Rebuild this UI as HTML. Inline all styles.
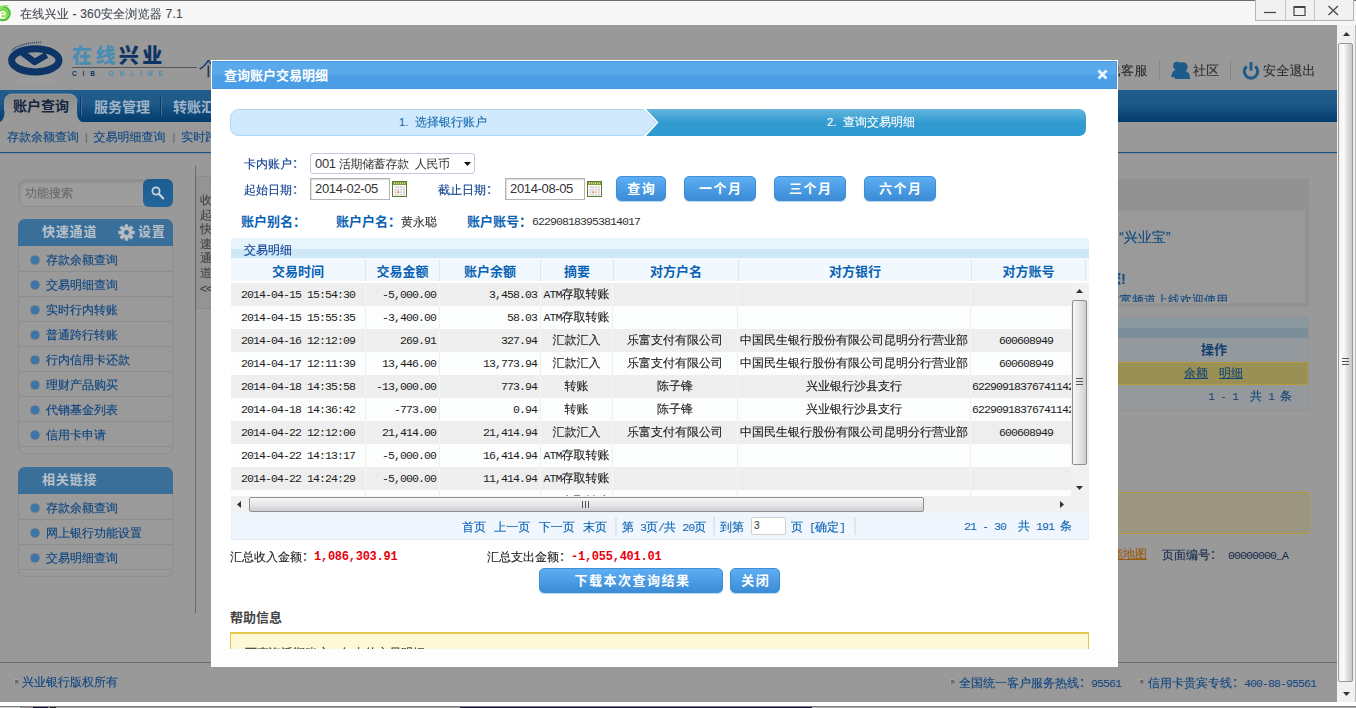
<!DOCTYPE html>
<html lang="zh-CN">
<head>
<meta charset="utf-8">
<title>在线兴业 - 360安全浏览器 7.1</title>
<style>
*{box-sizing:border-box;margin:0;padding:0}
html,body{width:1356px;height:708px;overflow:hidden;background:#fff}
body{position:relative;font-family:"Liberation Sans","WenQuanYi Zen Hei","Noto Sans CJK SC",sans-serif;font-size:12px;color:#333;-webkit-text-stroke:0.12px currentColor}
.abs{position:absolute}
.cn{font-family:"Noto Sans CJK SC",sans-serif}
b,.b{font-family:"Liberation Sans","Noto Sans CJK SC",sans-serif;font-weight:bold;-webkit-text-stroke:0}
.num{font-family:"Liberation Mono","WenQuanYi Zen Hei",monospace;font-size:11.5px;letter-spacing:-0.9px;-webkit-text-stroke:0}
/* ---------- browser chrome ---------- */
#chrome{left:0;top:0;width:1356px;height:25px;background:#f7f7f7;border-top:1px solid #707070}
#chrome .title{left:20px;top:5px;font-size:12px;color:#454a52;white-space:nowrap;letter-spacing:0.22px}
#winbtn{left:1255px;top:-1px;width:99px;height:21px;border:1px solid #b5b5b5;border-top:none;background:#f1f1f1}
#winbtn i{position:absolute;top:0;width:1px;height:20px;background:#c4c4c4}
/* ---------- page (dimmed) ---------- */
#page{left:0;top:25px;width:1337px;height:677px;background:#999;overflow:hidden}
#vscroll{left:1337px;top:25px;width:19px;height:677px;padding-left:1px;background:#f1f1f1;border-right:1px solid #b8b8b8}
#bottomw{left:0;top:702px;width:1356px;height:4px;background:#fff}
#bottomd{left:0;top:706px;width:1356px;height:2px;background:linear-gradient(#7a7a7a 0 50%,transparent 50%),linear-gradient(90deg,#d4d4d4 0 20px,#9b8d96 20px 33px,#10103c 33px 48px,#8a8a8a 48px 50px,#222 50px 56px,#a6a6a6 56px 460px,#141440 460px 812px,#b0b0b0 812px)}
.nav{left:0;top:65px;width:1338px;height:32px;background:linear-gradient(#215d8c 0%,#1f5a89 40%,#0a4576 80%,#043c6b 100%)}
.tab{top:3px;height:28px;font-size:15px;letter-spacing:1.5px;line-height:28px;white-space:nowrap;color:#9fb3c6}
.sub{top:97px;left:0;width:1338px;height:31px;border-bottom:1px solid #15548e;box-shadow:0 1px 1px #8d8d8d;color:#0e4782;line-height:31px;white-space:nowrap}
.side-h{left:18px;width:155px;height:27px;background:#3a6f9a;border-radius:7px 7px 0 0;color:#b8c1ca;font-size:13px;line-height:26px;letter-spacing:0.8px}
.side-b{left:18px;width:155px;border:1px solid #8e8e8e;border-top:none;border-radius:0 0 7px 7px;background:#9a9a9a}
.side-b{padding-top:1px}
.side-b div{height:25px;line-height:27px;border-bottom:1px solid #8d8d8d;padding-left:27px;color:#0a4480;position:relative;white-space:nowrap}
.side-b div:before{content:"";position:absolute;left:12px;top:9px;width:8px;height:8px;border-radius:50%;background:#3b76aa;box-shadow:0 0 0 0.8px #70767c}
.foot{color:#0f4580;white-space:nowrap}
.sq{width:5px;height:5px;background:#6c6c6c;border:1px solid #a8a8a8;border-right-color:#8a8a8a;border-bottom-color:#8a8a8a;border-radius:1px}
/* ---------- dialog ---------- */
#dlg{left:211px;top:60px;width:907px;height:607px;background:#fff;overflow:hidden}
#dlg .hd{left:1px;top:1px;width:905px;height:28px;box-shadow:inset 0 1px 0 #4796e0,inset -1px 0 0 #4796e0;background:linear-gradient(#5aa9ea 0%,#5aa9ea 46%,#4c9fe6 54%,#4a9ee5 100%);border-bottom:1px solid #4792dc;color:#fff;font-size:13px;line-height:30px;padding-left:12px}
.lbl{color:#0d3f8f;white-space:nowrap}
.inp{-webkit-text-stroke:0;border:1px solid #b4b4b4;background:#fff;height:22px;line-height:20px;padding-left:4px;font-size:13px;letter-spacing:-0.35px;color:#333;white-space:nowrap;box-shadow:inset 1px 1px 1px #ddd}
.btn{height:25px;border:1px solid #3f8ed6;border-radius:5px;background:linear-gradient(#5eaef2 0%,#4c9de5 50%,#3c8bd6 100%);color:#fff;font-size:13px;line-height:23px;text-align:center;letter-spacing:1.5px;white-space:nowrap;box-shadow:0 1px 1px #b5d3ee}
.th{top:199px;height:22px;line-height:26px;text-align:center;color:#0a62b4;font-size:13px;background:#f2f9fe;border-right:1px solid #d9e8f3;white-space:nowrap}
.row{left:20px;width:840px;height:23px;line-height:23px;white-space:nowrap;color:#1c1c1c;overflow:hidden}
.row>span{position:absolute;top:0;height:23px;border-right:1px solid #ededed;overflow:hidden}
.row.g{background:#eee}
.row.g>span{border-right-color:#f7f7f7}
.row.w{background:#fcfdfd}
.c1{left:0;width:135px;padding-left:10px}
.c2{left:135px;width:74px;text-align:right;padding-right:3px}
.c3{left:209px;width:101px;text-align:right;padding-right:3px}
.c4{left:310px;width:72px;text-align:center}
.c5{left:382px;width:125px;text-align:center}
.c6{left:507px;width:233px;text-align:center}
.c7{left:740px;width:110px;text-align:center;border-right:none!important}
.c7.l{text-align:left;padding-left:1px}
.pg{color:#0a62b4;white-space:nowrap;word-spacing:2.7px}
.pg .num{word-spacing:0}
</style>
</head>
<body>
<!-- browser title bar -->
<div id="chrome" class="abs">
  <svg class="abs" style="left:0;top:3px" width="13" height="19" viewBox="0 0 13 19"><circle cx="3" cy="9.5" r="7.8" fill="#4cbf3a"/><circle cx="3" cy="9.5" r="6" fill="#7bdc55"/><path d="M-3 5Q3-1 10 2Q5 1.5 0 5z" fill="#8fe06a"/><text x="-1.5" y="14.5" font-size="14" font-weight="bold" fill="#fff" font-family="Liberation Sans, sans-serif">e</text></svg>
  <div class="abs title">在线兴业 - 360安全浏览器 7.1</div>
  <div id="winbtn" class="abs"><i style="left:29px"></i><i style="left:58px"></i>
    <svg class="abs" style="left:0;top:0" width="98" height="20" viewBox="0 0 98 20"><path d="M8 12.5h12" stroke="#444" stroke-width="1.2" fill="none"/><path d="M38 6.5h11v9h-11z M38 7.4h11" stroke="#444" stroke-width="1.2" fill="none"/><path d="M72.5 6l9.5 9M82 6l-9.5 9" stroke="#444" stroke-width="1.2" fill="none"/></svg>
  </div>
</div>

<!-- dimmed page -->
<div id="page" class="abs">
  <!-- header -->
  <svg class="abs" style="left:0;top:10px" width="70" height="50" viewBox="0 35 70 50">
    <ellipse cx="35.3" cy="60.3" rx="23.7" ry="11.6" fill="none" stroke="#0c3466" stroke-width="7"/>
    <path d="M22 52.5 L34.6 62 L46.6 54.9" fill="none" stroke="#0c3466" stroke-width="6.4" stroke-linejoin="round"/>
    <path d="M12 50.5 Q19 43 41 42.3" fill="none" stroke="#1d3e70" stroke-width="1.8" stroke-dasharray="1.1 0.9" opacity="0.8"/>
    <ellipse cx="35" cy="80" rx="22" ry="3" fill="#a0a0a0" opacity="0.5"/>
  </svg>
  <div class="abs b" style="left:72px;top:18px;font-size:20px;font-weight:900;line-height:26px;letter-spacing:3.4px;white-space:nowrap;color:#0d3465"><span style="color:#4b8db2">在线</span>兴业</div>
  <div class="abs" style="left:72px;top:42px;width:125px;height:1px;background:#555"></div>
  <div class="abs b" style="left:72px;top:45px;font-size:6.5px;line-height:8px;letter-spacing:5.9px;white-space:nowrap;color:#0d3465">CIB <span style="color:#4b8db2">ONLINE</span></div>
  <div class="abs" style="left:199px;top:35px;width:140px;height:24px;overflow:hidden"><div class="abs" style="left:0;top:-2px;font-size:19px;line-height:22px;color:#143d6e;white-space:nowrap">个人网上银行</div></div>
  <!-- header right links -->
  <div class="abs" style="left:1094px;top:38px;font-size:13px;line-height:16px;color:#2e2e2e;white-space:nowrap;letter-spacing:0.5px">在线客服</div>
  <div class="abs" style="left:1159px;top:35px;width:1px;height:20px;background:#868686"></div>
  <svg class="abs" style="left:1170px;top:36px" width="22" height="19" viewBox="0 0 22 19"><g fill="#1c5b8a"><circle cx="7.2" cy="4.8" r="4.1"/><path d="M1.2 16.2q0.8-7.6 6-7.6t5 7.6z"/><circle cx="12.8" cy="6" r="4.8"/><path d="M4.6 18q0.6-8.2 8.2-8.2t7.4 8.2z"/></g></svg>
  <div class="abs" style="left:1193px;top:38px;font-size:13px;line-height:16px;color:#2e2e2e;white-space:nowrap;letter-spacing:0.3px">社区</div>
  <div class="abs" style="left:1230px;top:35px;width:1px;height:20px;background:#868686"></div>
  <svg class="abs" style="left:1241px;top:36px" width="20" height="20" viewBox="0 0 20 20"><path d="M14.3 5.3A6.7 6.7 0 1 1 5.7 5.3" fill="none" stroke="#1c5b8a" stroke-width="3"/><path d="M10 1v8.6" stroke="#1c5b8a" stroke-width="2.8"/></svg>
  <div class="abs" style="left:1263px;top:38px;font-size:13px;line-height:16px;color:#2e2e2e;white-space:nowrap;letter-spacing:0.2px">安全退出</div>

  <!-- main nav -->
  <div class="abs nav">
    <svg class="abs" style="left:0;top:3px" width="84" height="29" viewBox="0 0 84 29"><defs><linearGradient id="tg" x1="0" y1="0" x2="0" y2="1"><stop offset="0" stop-color="#8c8c8c"/><stop offset="0.5" stop-color="#979797"/><stop offset="1" stop-color="#999"/></linearGradient></defs><path d="M0 29C4 27 4.5 22 4.5 18V8.5A7.5 7.5 0 0 1 12 1H69.5A7.5 7.5 0 0 1 77 8.5V18C77 23 78 27 82 29z" fill="url(#tg)"/><path d="M4.5 18V8.5A7.5 7.5 0 0 1 12 1H69.5A7.5 7.5 0 0 1 77 8.5" fill="none" stroke="#a6a6a6" stroke-width="1" opacity="0.7"/></svg>
    <div class="abs tab b" style="left:13px;top:2px;color:#14263f;letter-spacing:0;font-size:14px">账户查询</div>
    <div class="abs" style="left:80px;top:7px;width:1px;height:19px;background:#0d3760"></div><div class="abs" style="left:81px;top:7px;width:1px;height:19px;background:#3a729f"></div>
    <div class="abs tab b" style="left:94px;letter-spacing:0;font-size:14px">服务管理</div>
    <div class="abs" style="left:160px;top:7px;width:1px;height:19px;background:#0d3760"></div><div class="abs" style="left:161px;top:7px;width:1px;height:19px;background:#3a729f"></div>
    <div class="abs tab b" style="left:173px;letter-spacing:0;font-size:14px">转账汇款</div>
  </div>
  <!-- sub nav -->
  <div class="abs sub"><span style="margin-left:7px">存款余额查询</span><span style="margin:0 6px 0 6px;color:#666;font-size:10px">|</span>交易明细查询<span style="margin:0 6px 0 7px;color:#666;font-size:10px">|</span>实时跨行转账</div>

  <!-- left sidebar -->
  <div class="abs" style="left:18px;top:154px;width:155px;height:28px;border-radius:7px;background:#9d9d9d;border:1px solid #919191;box-shadow:inset 1px 2px 3px #8a8a8a"></div>
  <div class="abs" style="left:25px;top:160px;color:#696969;font-size:12px;line-height:16px;white-space:nowrap">功能搜索</div>
  <div class="abs" style="left:143px;top:154px;width:30px;height:28px;border-radius:6px;background:linear-gradient(#1d5c8f,#23669b)"></div>
  <svg class="abs" style="left:150px;top:160px" width="16" height="16" viewBox="0 0 16 16"><circle cx="6" cy="6" r="3.6" fill="none" stroke="#c9d3dc" stroke-width="1.8"/><path d="M8.8 8.8l4.4 4.6" stroke="#c9d3dc" stroke-width="2.2" stroke-linecap="round"/></svg>

  <div class="abs side-h b" style="top:194px"><span class="abs" style="left:24px;top:0">快速通道</span>
    <svg class="abs" style="left:100px;top:5px" width="17" height="17" viewBox="-8.5 -8.5 17 17"><g fill="#b4bcc4"><circle r="5.6"/><rect x="-1.8" y="-8.2" width="3.6" height="16.4" rx="0.6" transform="rotate(0)"/><rect x="-1.8" y="-8.2" width="3.6" height="16.4" rx="0.6" transform="rotate(45)"/><rect x="-1.8" y="-8.2" width="3.6" height="16.4" rx="0.6" transform="rotate(90)"/><rect x="-1.8" y="-8.2" width="3.6" height="16.4" rx="0.6" transform="rotate(135)"/></g><circle r="2.4" fill="#3a6f9a"/></svg>
    <span class="abs" style="left:120px;top:0">设置</span></div>
  <div class="abs side-b" style="top:221px;height:208px">
    <div>存款余额查询</div><div>交易明细查询</div><div>实时行内转账</div><div>普通跨行转账</div><div>行内信用卡还款</div><div>理财产品购买</div><div>代销基金列表</div><div>信用卡申请</div>
  </div>
  <div class="abs side-h b" style="top:442px"><span class="abs" style="left:24px;top:0">相关链接</span></div>
  <div class="abs side-b" style="top:469px;height:83px">
    <div>存款余额查询</div><div>网上银行功能设置</div><div>交易明细查询</div>
  </div>

  <!-- divider + collapse handle -->
  <div class="abs" style="left:195px;top:141px;width:1px;height:447px;background:#6a6a6a"></div>
  <div class="abs" style="left:196px;top:151px;width:20px;height:133px;background:#949494;border:1px solid #8b8b8b"></div>
  <div class="abs" style="left:200px;top:168px;width:12px;font-size:12px;line-height:14.6px;color:#444;word-break:break-all">收起快速通道<span style="white-space:nowrap;letter-spacing:-1px;display:block;margin-top:1px">&lt;&lt;</span></div>

  <!-- right side content -->
  <div class="abs" style="left:600px;top:154px;width:709px;height:128px;background:#919191"></div>
  <div class="abs" style="left:600px;top:185px;width:706px;height:94px;background:#9a9a9a;border:1px solid #949494;overflow:hidden">
    <div class="abs" style="left:518px;top:17px;font-size:14px;line-height:18px;color:#124a80;white-space:nowrap">“兴业宝”</div>
    <div class="abs b" style="left:478px;top:59px;font-size:14px;line-height:18px;color:#124a80;white-space:nowrap">欢迎您!</div>
    <div class="abs" style="left:0;top:0;width:704px;height:91px;overflow:hidden"><div class="abs" style="left:459px;top:82px;font-size:12px;line-height:14px;color:#124a80;white-space:nowrap">兴业银行财富频道上线欢迎使用</div></div>
  </div>
  <div class="abs" style="left:600px;top:292px;width:709px;height:94px;background:#96999b;border:1px solid #929292"></div>
  <div class="abs" style="left:600px;top:293px;width:708px;height:10px;background:#8c989f"></div>
  <div class="abs" style="left:600px;top:303px;width:708px;height:10px;background:#7b8e99"></div>
  <div class="abs" style="left:600px;top:313px;width:708px;height:24px;background:#93999d"></div>
  <div class="abs b" style="left:1201px;top:316px;font-size:13px;line-height:18px;color:#123f6c;white-space:nowrap">操作</div>
  <div class="abs" style="left:600px;top:337px;width:708px;height:23px;background:#9a8f55;border:1px solid #b39a35;border-left:none"></div>
  <div class="abs" style="left:1184px;top:340px;line-height:16px;color:#114779;white-space:nowrap;text-decoration:underline">余额</div>
  <div class="abs" style="left:1219px;top:340px;line-height:16px;color:#114779;white-space:nowrap;text-decoration:underline">明细</div>
  <div class="abs" style="left:1208px;top:363px;line-height:16px;color:#114779;white-space:nowrap"><span class="num">1 - 1&nbsp; </span>共<span class="num"> 1 </span>条</div>
  <div class="abs" style="left:600px;top:467px;width:709px;height:42px;background:#9b9581;border:1px solid #ae9a3a"></div>
  <div class="abs" style="left:1099px;top:521px;line-height:16px;color:#9a5a10;white-space:nowrap;text-decoration:underline">功能地图</div>
  <div class="abs" style="left:1162px;top:521px;line-height:16px;color:#15294a;white-space:nowrap">页面编号<span class="cn">：</span><span class="num"> 00000000_A</span></div>

  <!-- footer -->
  <div class="abs" style="left:0;top:637px;width:1338px;height:1px;background:#6c6c6c"></div>
  <div class="abs sq" style="left:14px;top:654px"></div>
  <div class="abs foot" style="left:22px;top:649px;line-height:16px">兴业银行版权所有</div>
  <div class="abs sq" style="left:950px;top:654px"></div>
  <div class="abs foot" style="left:959px;top:649px;line-height:16px">全国统一客户服务热线<span class="cn">：</span><span class="num">95561</span></div>
  <div class="abs sq" style="left:1139px;top:654px"></div>
  <div class="abs foot" style="left:1148px;top:649px;line-height:16px">信用卡贵宾专线<span class="cn">：</span><span class="num">400-88-95561</span></div>
</div>

<div id="vscroll" class="abs">
  <svg class="abs" style="left:6px;top:7px" width="7" height="4" viewBox="0 0 7 4"><path d="M0 4h7L3.5 0z" fill="#333"/></svg>
  <div class="abs" style="left:1px;top:18px;width:15px;height:639px;border:1px solid #979797;border-radius:2px;background:linear-gradient(90deg,#f2f2f2 0%,#fbfbfb 35%,#dcdcdf 70%,#c6c6ca 100%)"></div>
  <div class="abs" style="left:5px;top:333px;width:7px;height:8px;background:repeating-linear-gradient(#555 0 1px,transparent 1px 3px)"></div>
  <svg class="abs" style="left:6px;top:667px" width="7" height="4" viewBox="0 0 7 4"><path d="M0 0h7L3.5 4z" fill="#333"/></svg>
</div>
<div id="bottomw" class="abs"></div>
<div id="bottomd" class="abs"></div>

<!-- dialog -->
<div id="dlg" class="abs">
  <div class="abs hd b">查询账户交易明细
    <svg class="abs" style="left:885px;top:8px" width="11" height="11" viewBox="0 0 11 11"><path d="M1.5 1.5l8 8M9.5 1.5l-8 8" stroke="#eef6ff" stroke-width="2.6"/></svg>
  </div>
  <!-- steps -->
  <svg class="abs" style="left:19px;top:48px" width="858" height="30" viewBox="0 0 858 30">
    <defs><linearGradient id="sg" x1="0" y1="0" x2="0" y2="1"><stop offset="0" stop-color="#66b5dd"/><stop offset="0.5" stop-color="#329cd1"/><stop offset="1" stop-color="#2f9ad0"/></linearGradient></defs>
    <path d="M8.5 1.5H413.5l12.5 13-12.5 13H8.5a8 8 0 0 1-8-8v-10a8 8 0 0 1 8-8z" fill="#d0e9fc" stroke="#a9d6f7" stroke-width="1"/>
    <path d="M416 1h433a7 7 0 0 1 7 7v13a7 7 0 0 1-7 7H416l12.5-13.5z" fill="url(#sg)"/>
  </svg>
  <div class="abs" style="left:19px;top:49px;width:426px;height:27px;line-height:27px;text-align:center;color:#1c6db2;white-space:nowrap"><span style="font-size:11px">1.</span>&nbsp; 选择银行账户</div>
  <div class="abs" style="left:445px;top:49px;width:430px;height:27px;line-height:27px;text-align:center;color:#fff;white-space:nowrap;padding-left:0"><span style="font-size:11px">2.</span>&nbsp; 查询交易明细</div>

  <!-- form -->
  <div class="abs lbl" style="left:33px;top:95px;line-height:16px">卡内账户<span class="cn">：</span></div>
  <div class="abs inp" style="left:99px;top:93px;width:165px;height:21px;line-height:19px;border-radius:3px;font-size:13px;box-shadow:none;border-color:#c3cadf">001&nbsp;<span style="font-size:12px">活期储蓄存款&nbsp; 人民币</span>
    <svg class="abs" style="left:153px;top:8px" width="7" height="4" viewBox="0 0 7 4"><path d="M0 0h7L3.5 4z" fill="#111"/></svg></div>
  <div class="abs lbl" style="left:33px;top:121px;line-height:16px">起始日期<span class="cn">：</span></div>
  <div class="abs inp" style="left:99px;top:118px;width:80px">2014-02-05</div>
  <svg class="abs cal" style="left:181px;top:121px" width="15" height="16" viewBox="0 0 15 16"><rect x="0.5" y="0.5" width="14" height="15" fill="#fff" stroke="#5f7c22"/><rect x="1" y="1" width="13" height="3" fill="#7f9d3c"/><path d="M2 2.2h11" stroke="#dfeac4" stroke-width="1.2" stroke-dasharray="1 1"/><rect x="2.5" y="5.3" width="2" height="1.8" fill="#b9d2ee"/><rect x="5.3" y="5.3" width="2" height="1.8" fill="#f1c4c4"/><rect x="8.1" y="5.3" width="2" height="1.8" fill="#b9d2ee"/><rect x="10.9" y="5.3" width="2" height="1.8" fill="#f1c4c4"/><rect x="2.5" y="7.8" width="2" height="1.8" fill="#f1c4c4"/><rect x="5.3" y="7.8" width="2" height="1.8" fill="#b9d2ee"/><rect x="8.1" y="7.8" width="2" height="1.8" fill="#f1c4c4"/><rect x="10.9" y="7.8" width="2" height="1.8" fill="#b9d2ee"/><rect x="2.5" y="10.3" width="2" height="1.8" fill="#b9d2ee"/><rect x="5.3" y="10.3" width="2" height="1.8" fill="#f08a24"/><rect x="8.1" y="10.3" width="2" height="1.8" fill="#b9d2ee"/><rect x="10.9" y="10.3" width="2" height="1.8" fill="#f1c4c4"/><rect x="2.5" y="12.8" width="2" height="1.8" fill="#f1c4c4"/><rect x="5.3" y="12.8" width="2" height="1.8" fill="#b9d2ee"/><rect x="8.1" y="12.8" width="2" height="1.8" fill="#f1c4c4"/><rect x="10.9" y="12.8" width="2" height="1.8" fill="#b9d2ee"/></svg>
  <div class="abs lbl" style="left:227px;top:121px;line-height:16px">截止日期<span class="cn">：</span></div>
  <div class="abs inp" style="left:294px;top:118px;width:80px">2014-08-05</div>
  <svg class="abs cal" style="left:376px;top:121px" width="15" height="16" viewBox="0 0 15 16"><rect x="0.5" y="0.5" width="14" height="15" fill="#fff" stroke="#5f7c22"/><rect x="1" y="1" width="13" height="3" fill="#7f9d3c"/><path d="M2 2.2h11" stroke="#dfeac4" stroke-width="1.2" stroke-dasharray="1 1"/><rect x="2.5" y="5.3" width="2" height="1.8" fill="#b9d2ee"/><rect x="5.3" y="5.3" width="2" height="1.8" fill="#f1c4c4"/><rect x="8.1" y="5.3" width="2" height="1.8" fill="#b9d2ee"/><rect x="10.9" y="5.3" width="2" height="1.8" fill="#f1c4c4"/><rect x="2.5" y="7.8" width="2" height="1.8" fill="#f1c4c4"/><rect x="5.3" y="7.8" width="2" height="1.8" fill="#b9d2ee"/><rect x="8.1" y="7.8" width="2" height="1.8" fill="#f1c4c4"/><rect x="10.9" y="7.8" width="2" height="1.8" fill="#b9d2ee"/><rect x="2.5" y="10.3" width="2" height="1.8" fill="#b9d2ee"/><rect x="5.3" y="10.3" width="2" height="1.8" fill="#f08a24"/><rect x="8.1" y="10.3" width="2" height="1.8" fill="#b9d2ee"/><rect x="10.9" y="10.3" width="2" height="1.8" fill="#f1c4c4"/><rect x="2.5" y="12.8" width="2" height="1.8" fill="#f1c4c4"/><rect x="5.3" y="12.8" width="2" height="1.8" fill="#b9d2ee"/><rect x="8.1" y="12.8" width="2" height="1.8" fill="#f1c4c4"/><rect x="10.9" y="12.8" width="2" height="1.8" fill="#b9d2ee"/></svg>
  <div class="abs btn b" style="left:405px;top:116px;width:50px;padding-left:1.5px">查询</div>
  <div class="abs btn b" style="left:473px;top:116px;width:72px;padding-left:1.5px">一个月</div>
  <div class="abs btn b" style="left:563px;top:116px;width:72px;padding-left:1.5px">三个月</div>
  <div class="abs btn b" style="left:653px;top:116px;width:72px;padding-left:1.5px">六个月</div>

  <div class="abs b" style="left:30px;top:153px;font-size:13px;line-height:18px;color:#0a62b4;white-space:nowrap">账户别名：</div>
  <div class="abs b" style="left:125px;top:153px;font-size:13px;line-height:18px;color:#0a62b4;white-space:nowrap">账户户名：</div>
  <div class="abs" style="left:190px;top:154px;line-height:16px;white-space:nowrap">黄永聪</div>
  <div class="abs b" style="left:256px;top:153px;font-size:13px;line-height:18px;color:#0a62b4;white-space:nowrap">账户账号：</div>
  <div class="abs num" style="left:321px;top:154px;line-height:16px;white-space:nowrap">622908183953814017</div>

  <!-- grid -->
  <div class="abs" style="left:20px;top:178px;width:858px;height:11px;background:#e9f5fd"></div>
  <div class="abs" style="left:20px;top:189px;width:858px;height:9px;background:#cfe8f8"></div>
  <div class="abs lbl" style="left:33px;top:182px;line-height:16px">交易明细</div>
  <div class="abs" style="left:20px;top:198px;width:858px;height:23px;background:#f2f9fe"></div>
  <div class="abs th b" style="left:20px;width:135px">交易时间</div>
  <div class="abs th b" style="left:155px;width:74px">交易金额</div>
  <div class="abs th b" style="left:229px;width:101px">账户余额</div>
  <div class="abs th b" style="left:330px;width:73px">摘要</div>
  <div class="abs th b" style="left:403px;width:125px">对方户名</div>
  <div class="abs th b" style="left:528px;width:233px">对方银行</div>
  <div class="abs th b" style="left:761px;width:114px">对方账号</div>
  <div class="abs" style="left:20px;top:223px;width:840px;height:213px;overflow:hidden;background:#fff"></div>
  <div class="abs" id="rows" style="left:0;top:0;width:860px;height:436px;overflow:hidden">
<div class="abs row g" style="top:223px"><span class="c1 num">2014-04-15 15:54:30</span><span class="c2 num">-5,000.00</span><span class="c3 num">3,458.03</span><span class="c4"><i class="num" style="font-style:normal">ATM</i>存取转账</span><span class="c5"></span><span class="c6"></span><span class="c7 num"></span></div>
<div class="abs row w" style="top:246px"><span class="c1 num">2014-04-15 15:55:35</span><span class="c2 num">-3,400.00</span><span class="c3 num">58.03</span><span class="c4"><i class="num" style="font-style:normal">ATM</i>存取转账</span><span class="c5"></span><span class="c6"></span><span class="c7 num"></span></div>
<div class="abs row g" style="top:269px"><span class="c1 num">2014-04-16 12:12:09</span><span class="c2 num">269.91</span><span class="c3 num">327.94</span><span class="c4">汇款汇入</span><span class="c5">乐富支付有限公司</span><span class="c6">中国民生银行股份有限公司昆明分行营业部</span><span class="c7 num">600608949</span></div>
<div class="abs row w" style="top:292px"><span class="c1 num">2014-04-17 12:11:39</span><span class="c2 num">13,446.00</span><span class="c3 num">13,773.94</span><span class="c4">汇款汇入</span><span class="c5">乐富支付有限公司</span><span class="c6">中国民生银行股份有限公司昆明分行营业部</span><span class="c7 num">600608949</span></div>
<div class="abs row g" style="top:315px"><span class="c1 num">2014-04-18 14:35:58</span><span class="c2 num">-13,000.00</span><span class="c3 num">773.94</span><span class="c4">转账</span><span class="c5">陈子锋</span><span class="c6">兴业银行沙县支行</span><span class="c7 num l">6229091837674114233</span></div>
<div class="abs row w" style="top:338px"><span class="c1 num">2014-04-18 14:36:42</span><span class="c2 num">-773.00</span><span class="c3 num">0.94</span><span class="c4">转账</span><span class="c5">陈子锋</span><span class="c6">兴业银行沙县支行</span><span class="c7 num l">6229091837674114233</span></div>
<div class="abs row g" style="top:361px"><span class="c1 num">2014-04-22 12:12:00</span><span class="c2 num">21,414.00</span><span class="c3 num">21,414.94</span><span class="c4">汇款汇入</span><span class="c5">乐富支付有限公司</span><span class="c6">中国民生银行股份有限公司昆明分行营业部</span><span class="c7 num">600608949</span></div>
<div class="abs row w" style="top:384px"><span class="c1 num">2014-04-22 14:13:17</span><span class="c2 num">-5,000.00</span><span class="c3 num">16,414.94</span><span class="c4"><i class="num" style="font-style:normal">ATM</i>存取转账</span><span class="c5"></span><span class="c6"></span><span class="c7 num"></span></div>
<div class="abs row g" style="top:407px"><span class="c1 num">2014-04-22 14:24:29</span><span class="c2 num">-5,000.00</span><span class="c3 num">11,414.94</span><span class="c4"><i class="num" style="font-style:normal">ATM</i>存取转账</span><span class="c5"></span><span class="c6"></span><span class="c7 num"></span></div>
<div class="abs row w" style="top:430px"><span class="c1 num">2014-04-22 14:30:12</span><span class="c2 num">-5,000.00</span><span class="c3 num">6,414.94</span><span class="c4"><i class="num" style="font-style:normal">ATM</i>存取转账</span><span class="c5"></span><span class="c6"></span><span class="c7 num"></span></div>

  </div>
  <!-- v scrollbar -->
  <div class="abs" style="left:860px;top:223px;width:18px;height:213px;background:#f1f1f1"></div>
  <svg class="abs" style="left:865px;top:229px" width="7" height="4" viewBox="0 0 7 4"><path d="M0 4h7L3.5 0z" fill="#333"/></svg>
  <div class="abs" style="left:861px;top:240px;width:15px;height:165px;border:1px solid #8f8f8f;border-radius:2px;background:linear-gradient(90deg,#f6f6f6,#e6e6e8 50%,#cfcfd3)"></div>
  <div class="abs" style="left:865px;top:318px;width:7px;height:8px;background:repeating-linear-gradient(#555 0 1px,transparent 1px 3px)"></div>
  <svg class="abs" style="left:865px;top:426px" width="7" height="4" viewBox="0 0 7 4"><path d="M0 0h7L3.5 4z" fill="#333"/></svg>
  <!-- h scrollbar -->
  <div class="abs" style="left:20px;top:436px;width:858px;height:17px;background:#f1f1f1"></div>
  <svg class="abs" style="left:26px;top:441px" width="4" height="7" viewBox="0 0 4 7"><path d="M4 0v7L0 3.5z" fill="#333"/></svg>
  <div class="abs" style="left:38px;top:437px;width:675px;height:15px;border:1px solid #8f8f8f;border-radius:2px;background:linear-gradient(#f6f6f6,#e6e6e8 50%,#cfcfd3)"></div>
  <div class="abs" style="left:371px;top:441px;width:8px;height:7px;background:repeating-linear-gradient(90deg,#555 0 1px,transparent 1px 3px)"></div>
  <svg class="abs" style="left:849px;top:441px" width="4" height="7" viewBox="0 0 4 7"><path d="M0 0v7L4 3.5z" fill="#333"/></svg>
  <!-- pager -->
  <div class="abs" style="left:20px;top:453px;width:858px;height:27px;background:#eff6fd;border:1px solid #e6edf4;border-top:none"></div>
  <div class="abs pg" style="left:251px;top:459px;line-height:16px;word-spacing:5px">首页 上一页 下一页 末页</div>
  <div class="abs" style="left:404px;top:457px;width:2px;height:18px;background:#dfe6ec"></div>
  <div class="abs pg" style="left:411px;top:459px;line-height:16px">第 <span class="num">3</span>页<span class="num">/</span>共 <span class="num">20</span>页</div>
  <div class="abs" style="left:502px;top:457px;width:2px;height:18px;background:#dfe6ec"></div>
  <div class="abs pg" style="left:509px;top:459px;line-height:16px">到第</div>
  <div class="abs" style="left:540px;top:457px;width:35px;height:18px;background:#fff;border:1px solid #d0d0d0;border-radius:2px;font-size:10px;line-height:15px;padding-left:2px;color:#444">3</div>
  <div class="abs pg" style="left:580px;top:459px;line-height:16px">页<span class="num"> [</span>确定<span class="num">]</span></div>
  <div class="abs" style="left:643px;top:457px;width:2px;height:18px;background:#dfe6ec"></div>
  <div class="abs pg" style="left:753px;top:458px;line-height:16px;word-spacing:0"><span class="num">21 - 30&nbsp; </span>共<span class="num"> 191 </span>条</div>

  <!-- totals -->
  <div class="abs" style="left:19px;top:488px;line-height:16px;white-space:nowrap;color:#222">汇总收入金额<span class="cn">：</span></div>
  <div class="abs" style="left:103px;top:489px;line-height:16px;white-space:nowrap;color:#e8000c;-webkit-text-stroke:0;font-family:'Liberation Mono',monospace;font-weight:bold;font-size:12px;letter-spacing:-0.25px">1,086,303.91</div>
  <div class="abs" style="left:276px;top:488px;line-height:16px;white-space:nowrap;color:#222">汇总支出金额<span class="cn">：</span></div>
  <div class="abs" style="left:360px;top:489px;line-height:16px;white-space:nowrap;color:#e8000c;-webkit-text-stroke:0;font-family:'Liberation Mono',monospace;font-weight:bold;font-size:12px;letter-spacing:-0.25px">-1,055,401.01</div>
  <div class="abs btn b" style="left:328px;top:508px;width:184px;padding-left:3px">下载本次查询结果</div>
  <div class="abs btn b" style="left:519px;top:508px;width:50px;padding-left:1.5px">关闭</div>

  <!-- help -->
  <div class="abs b" style="left:19px;top:549px;font-size:13px;line-height:18px;color:#444;white-space:nowrap">帮助信息</div>
  <div class="abs" style="left:19px;top:572px;width:859px;height:60px;background:#fff8d6;border:1px solid #e3c84e;border-top-width:2px"></div>
  <div class="abs" style="left:34px;top:586px;line-height:14px;white-space:nowrap;color:#333">可查询活期账户一年内的交易明细。</div>
  <div class="abs" style="left:0;top:589px;width:906px;height:18px;background:#fcfdfc"></div>
</div>
</body>
</html>
